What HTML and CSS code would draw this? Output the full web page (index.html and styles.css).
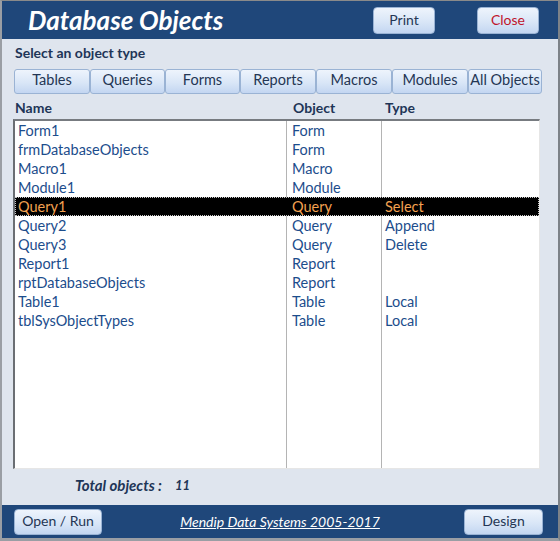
FILE: index.html
```html
<!DOCTYPE html>
<html>
<head>
<meta charset="utf-8">
<title>Database Objects</title>
<link rel="stylesheet" href="styles.css">
</head>
<body>
<div class="window">
  <header class="titlebar">
    <h1 class="title">Database Objects</h1>
    <div class="title-actions">
      <button class="btn btn-print">Print</button>
      <button class="btn btn-close">Close</button>
    </div>
  </header>
  <main class="content">
    <div class="section-label">Select an object type</div>
    <div class="tabs">
      <button class="btn tab">Tables</button>
      <button class="btn tab">Queries</button>
      <button class="btn tab">Forms</button>
      <button class="btn tab">Reports</button>
      <button class="btn tab">Macros</button>
      <button class="btn tab">Modules</button>
      <button class="btn tab">All Objects</button>
    </div>
    <div class="list-head">
      <div class="col-name">Name</div>
      <div class="col-object">Object</div>
      <div class="col-type">Type</div>
    </div>
    <div class="listbox">
      <div class="divider d1"></div>
      <div class="divider d2"></div>
      <div class="row"><span class="c-name">Form1</span><span class="c-object">Form</span><span class="c-type"></span></div>
      <div class="row"><span class="c-name">frmDatabaseObjects</span><span class="c-object">Form</span><span class="c-type"></span></div>
      <div class="row"><span class="c-name">Macro1</span><span class="c-object">Macro</span><span class="c-type"></span></div>
      <div class="row"><span class="c-name">Module1</span><span class="c-object">Module</span><span class="c-type"></span></div>
      <div class="row selected"><span class="c-name">Query1</span><span class="c-object">Query</span><span class="c-type">Select</span></div>
      <div class="row"><span class="c-name">Query2</span><span class="c-object">Query</span><span class="c-type">Append</span></div>
      <div class="row"><span class="c-name">Query3</span><span class="c-object">Query</span><span class="c-type">Delete</span></div>
      <div class="row"><span class="c-name">Report1</span><span class="c-object">Report</span><span class="c-type"></span></div>
      <div class="row"><span class="c-name">rptDatabaseObjects</span><span class="c-object">Report</span><span class="c-type"></span></div>
      <div class="row"><span class="c-name">Table1</span><span class="c-object">Table</span><span class="c-type">Local</span></div>
      <div class="row"><span class="c-name">tblSysObjectTypes</span><span class="c-object">Table</span><span class="c-type">Local</span></div>
    </div>
    <div class="total">
      <span class="total-label">Total objects :</span>
      <span class="total-value">11</span>
    </div>
  </main>
  <footer class="footer">
    <button class="btn btn-open">Open / Run</button>
    <a class="credit" href="#">Mendip Data Systems 2005-2017</a>
    <button class="btn btn-design">Design</button>
  </footer>
</div>
</body>
</html>
```
FILE: styles.css
```css
* { box-sizing: border-box; }
html, body { margin: 0; padding: 0; }
body {
  font-family: Lato, "Open Sans", sans-serif;
  background: #ffffff;
}
.window {
  width: 560px;
  height: 541px;
  display: flex;
  flex-direction: column;
  background: #dfe5ee;
  border-top: 1px solid #8a8a8a;
  border-left: 2px solid #9a9ea4;
  border-right: 2px solid #7d8288;
  border-bottom: 3px solid #9a9ea4;
}
.titlebar {
  height: 38px;
  flex: none;
  background: #1f477a;
  display: flex;
  align-items: flex-start;
  justify-content: space-between;
  padding: 0 19px 0 26px;
}
.title {
  margin: 5px 0 0 0;
  font-size: 26px;
  font-weight: 700;
  font-style: italic;
  color: #ffffff;
  line-height: 28px;
  letter-spacing: 0;
}
.title-actions {
  display: flex;
  gap: 42px;
  margin-top: 6px;
}
.btn {
  font-family: Lato, "Open Sans", sans-serif;
  font-size: 14px;
  color: #243654;
  background: linear-gradient(#eef4fc, #d9e6f7 55%, #c3d6f1);
  border: 1px solid #9ab3d4;
  border-radius: 4px;
  padding: 0 0 2px 0;
  margin: 0;
  line-height: 1;
  display: flex;
  align-items: center;
  justify-content: center;
}
.btn-print, .btn-close { width: 62px; height: 27px; }
.btn-close { color: #c0142b; }
.content {
  flex: 1;
  display: flex;
  flex-direction: column;
  padding: 0 0 0 11px;
}
.section-label {
  margin-top: 5px;
  height: 18px;
  font-size: 14px;
  font-weight: 700;
  color: #1e3557;
  padding-left: 2px;
  line-height: 18px;
}
.tabs {
  margin-top: 7px;
  display: grid;
  grid-template-columns: 76px 75px 75px 76px 76px 76px 74px;
  width: 530px;
  margin-left: 1px;
}
.tab {
  height: 25px;
  border-radius: 3px;
  font-size: 14.5px;
}
.list-head {
  display: flex;
  height: 24px;
  align-items: center;
  font-size: 14px;
  font-weight: 700;
  color: #1e3557;
  margin-top: 0;
  padding-top: 2px;
}
.col-name { width: 280px; padding-left: 2px; }
.col-object { width: 92px; }
.col-type { width: 100px; }
.listbox {
  position: relative;
  width: 527px;
  height: 350px;
  margin-top: 1px;
  background: #ffffff;
  border-top: 2px solid #777b80;
  border-left: 2px solid #6a6e73;
  border-right: 1px solid #e6e6e6;
  border-bottom: 1px solid #e6e6e6;
  padding-top: 0;
}
.divider {
  position: absolute;
  top: 0;
  bottom: 0;
  width: 1px;
  background: #b4b4b4;
}
.d1 { left: 271px; }
.d2 { left: 366px; }
.row {
  position: relative;
  display: flex;
  height: 19px;
  align-items: center;
  font-size: 14.5px;
  color: #1c4d8c;
  white-space: nowrap;
  padding-bottom: 1px;
}
.c-name { width: 274px; padding-left: 3px; }
.c-object { width: 95px; padding-left: 3px; }
.c-type { padding-left: 1px; }
.row.selected {
  background: #000000;
  color: #f4a251;
  outline: 1px dotted #c8c8c8;
  outline-offset: -1px;
  z-index: 1;
}
.total {
  display: flex;
  align-items: center;
  height: 33px;
  padding-left: 62px;
  padding-bottom: 2px;
  gap: 13px;
  font-weight: 700;
  font-style: italic;
  color: #1e3557;
}
.total-label { font-size: 15px; }
.total-value { font-size: 13px; }
.footer {
  height: 33px;
  flex: none;
  background: #1f477a;
  display: flex;
  align-items: center;
  justify-content: space-between;
  padding: 0 15px 0 12px;
}
.btn-open { width: 88px; height: 26px; }
.btn-design { width: 79px; height: 26px; }
.credit {
  color: #ffffff;
  font-style: italic;
  font-size: 14px;
  text-decoration: underline;
  margin-right: 6px;
}
```
